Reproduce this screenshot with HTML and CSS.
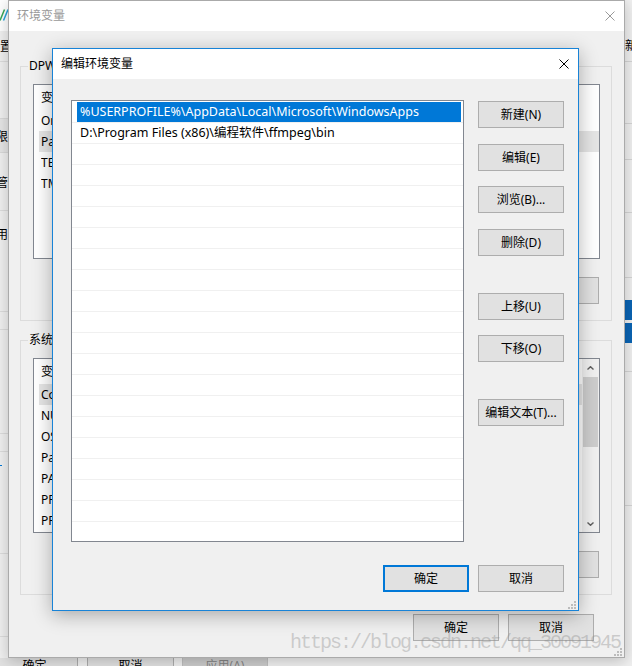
FILE: index.html
```html
<!DOCTYPE html>
<html lang="zh-CN">
<head>
<meta charset="utf-8">
<title>编辑环境变量</title>
<link rel="stylesheet" href="styles.css">
</head>
<body>
<div class="desk">
  <aside class="bg-left">
    <div class="bl-top">
      <svg class="bl-logo" width="8" height="12" viewBox="0 0 8 12"><path d="M0 11.5 L4.5 0.5" stroke="#3aa757" stroke-width="1.5"/><path d="M3.5 11.5 L8 0.5" stroke="#27a4dd" stroke-width="1.5"/></svg>
    </div>
    <div class="bl-cell bl-h31 bl-line"><span class="bl-txt">置</span></div>
    <div class="bl-space bl-h56"></div>
    <div class="bl-cell bl-band"><span class="bl-txt bl-shift">限</span></div>
    <div class="bl-cell bl-h58 bl-line"><span class="bl-txt bl-shift">管</span></div>
    <div class="bl-cell bl-h45"><span class="bl-txt bl-shift">用</span></div>
    <div class="bl-space bl-h56 bl-line"></div>
    <div class="bl-space bl-h18 bl-line"></div>
    <div class="bl-space bl-h104 bl-line"></div>
    <div class="bl-space bl-h18 bl-line"></div>
    <div class="bl-space bl-h30"><span class="bl-tick"></span></div>
    <div class="bl-space bl-h72 bl-line"></div>
    <div class="bl-space bl-h83 bl-line"></div>
  </aside>

  <aside class="bg-right">
    <div class="br-cell br-h62 br-line"><span class="br-txt">新</span></div>
    <div class="br-cell br-h62 br-line"></div>
    <div class="br-cell br-h36 br-line"></div>
    <div class="br-cell br-h53 br-line"></div>
    <div class="br-cell br-h65 br-line"></div>
    <div class="br-cell br-h22"></div>
    <div class="br-blue br-h20"></div>
    <div class="br-cell br-h3"></div>
    <div class="br-blue br-h20"></div>
    <div class="br-cell br-h29 br-line"></div>
    <div class="br-cell br-h134 br-line"></div>
  </aside>

  <div class="bg-bottom">
    <div class="bb-row">
      <span class="bb-btn bb-first">确定</span>
      <span class="bb-btn">取消</span>
      <span class="bb-btn bb-off">应用(A)</span>
    </div>
  </div>

  <section class="win env">
    <header class="titlebar">
      <span class="title env-title">环境变量</span>
      <svg class="close" width="10" height="10" viewBox="0 0 10 10"><path d="M0.5 0.5 L9.5 9.5 M9.5 0.5 L0.5 9.5" stroke="#999" stroke-width="1"/></svg>
    </header>
    <div class="env-body">
      <fieldset class="group">
        <legend>DPW 的用户变量(U)</legend>
        <div class="lv">
          <div class="lv-main">
            <div class="lv-head"><span class="col-name">变量</span><span class="col-val">值</span></div>
            <div class="lv-row"><span class="col-name">OneDrive</span><span class="col-val">C:\Users\DPW\OneDrive</span></div>
            <div class="lv-row lv-sel"><span class="col-name">Path</span><span class="col-val">%USERPROFILE%\AppData\Local\Microsoft\WindowsApps;</span></div>
            <div class="lv-row"><span class="col-name">TEMP</span><span class="col-val">%USERPROFILE%\AppData\Local\Temp</span></div>
            <div class="lv-row"><span class="col-name">TMP</span><span class="col-val">%USERPROFILE%\AppData\Local\Temp</span></div>
          </div>
        </div>
        <div class="btnrow">
          <button class="btn">新建(N)...</button>
          <button class="btn">编辑(E)...</button>
          <button class="btn">删除(D)</button>
        </div>
      </fieldset>
      <fieldset class="group group2">
        <legend>系统变量(S)</legend>
        <div class="lv">
          <div class="lv-main">
            <div class="lv-head"><span class="col-name">变量</span><span class="col-val">值</span></div>
            <div class="lv-row lv-sel"><span class="col-name">ComSpec</span><span class="col-val">C:\Windows\system32\cmd.exe</span></div>
            <div class="lv-row"><span class="col-name">NUMBER_OF_PROCESSORS</span><span class="col-val">4</span></div>
            <div class="lv-row"><span class="col-name">OS</span><span class="col-val">Windows_NT</span></div>
            <div class="lv-row"><span class="col-name">Path</span><span class="col-val">C:\Windows\system32;C:\Windows</span></div>
            <div class="lv-row"><span class="col-name">PATHEXT</span><span class="col-val">.COM;.EXE;.BAT;.CMD</span></div>
            <div class="lv-row"><span class="col-name">PROCESSOR_ARCHITECTURE</span><span class="col-val">AMD64</span></div>
            <div class="lv-row"><span class="col-name">PROCESSOR_IDENTIFIER</span><span class="col-val">Intel64 Family 6</span></div>
          </div>
          <div class="vscroll">
            <span class="sb-arrow"><svg width="7" height="4" viewBox="0 0 7 4"><path d="M0.5 3.5 L3.5 0.7 L6.5 3.5" fill="none" stroke="#606060" stroke-width="1.4"/></svg></span>
            <div class="sb-track"><span class="sb-thumb"></span></div>
            <span class="sb-arrow"><svg width="7" height="4" viewBox="0 0 7 4"><path d="M0.5 0.5 L3.5 3.3 L6.5 0.5" fill="none" stroke="#606060" stroke-width="1.4"/></svg></span>
          </div>
        </div>
        <div class="btnrow">
          <button class="btn">新建(W)...</button>
          <button class="btn">编辑(I)...</button>
          <button class="btn">删除(L)</button>
        </div>
      </fieldset>
      <div class="okrow">
        <button class="btn">确定</button>
        <button class="btn">取消</button>
      </div>
    </div>
    <svg class="grip" width="8" height="8" viewBox="0 0 8 8"><g fill="#bcbcbc"><rect x="6" y="0" width="2" height="2"/><rect x="3" y="3" width="2" height="2"/><rect x="6" y="3" width="2" height="2"/><rect x="0" y="6" width="2" height="2"/><rect x="3" y="6" width="2" height="2"/><rect x="6" y="6" width="2" height="2"/></g></svg>
  </section>

  <section class="win dlg">
    <header class="titlebar">
      <span class="title">编辑环境变量</span>
      <svg class="close" width="10" height="10" viewBox="0 0 10 10"><path d="M0.5 0.5 L9.5 9.5 M9.5 0.5 L0.5 9.5" stroke="#000" stroke-width="1"/></svg>
    </header>
    <div class="dlg-body">
      <div class="dlg-main">
        <div class="pathlist">
          <div class="item item-sel"><span class="cell">%USERPROFILE%\AppData\Local\Microsoft\WindowsApps</span></div>
          <div class="item"><span class="cell">D:\Program Files (x86)\编程软件\ffmpeg\bin</span></div>
        </div>
        <div class="btncol">
          <button class="btn">新建(N)</button>
          <button class="btn mt16">编辑(E)</button>
          <button class="btn mt15">浏览(B)...</button>
          <button class="btn mt16">删除(D)</button>
          <button class="btn mt37">上移(U)</button>
          <button class="btn mt15">下移(O)</button>
          <button class="btn mt37">编辑文本(T)...</button>
        </div>
      </div>
      <div class="dlg-foot">
        <button class="btn btn-default">确定</button>
        <button class="btn">取消</button>
      </div>
    </div>
    <svg class="grip dlg-grip" width="8" height="8" viewBox="0 0 8 8"><g fill="#bcbcbc"><rect x="6" y="0" width="2" height="2"/><rect x="3" y="3" width="2" height="2"/><rect x="6" y="3" width="2" height="2"/><rect x="0" y="6" width="2" height="2"/><rect x="3" y="6" width="2" height="2"/><rect x="6" y="6" width="2" height="2"/></g></svg>
  </section>

  <div class="watermark">https://blog.csdn.net/qq_30091945</div>
</div>
</body>
</html>
```

FILE: styles.css
```css
* { box-sizing: border-box; }
html, body { margin: 0; padding: 0; }
body {
  width: 632px;
  height: 666px;
  overflow: hidden;
  background: #f0f0f0;
  font-family: "Noto Sans", "Noto Sans CJK SC", sans-serif;
  font-size: 12px;
  line-height: 16px;
  color: #000;
}
.desk { position: relative; width: 632px; height: 666px; overflow: hidden; }

/* ---------- third window fragments (behind) ---------- */
.bg-left {
  position: absolute; left: 0; top: 0; width: 8px; height: 666px;
  display: flex; flex-direction: column; overflow: hidden;
}
.bl-top { height: 31px; flex: none; background: #fff; display: flex; align-items: center; }
.bl-logo { display: block; margin-top: -2px; }
.bl-cell { flex: none; display: flex; align-items: center; overflow: hidden; white-space: nowrap; }
.bl-space { flex: none; }
.bl-line { border-bottom: 1px solid #dcdcdc; }
.bl-txt { display: block; font-family: "Noto Sans CJK SC", sans-serif; }
.bl-shift { margin-left: -4px; }
.bl-h31 { height: 31px; }
.bl-h56 { height: 56px; }
.bl-h58 { height: 58px; }
.bl-h45 { height: 45px; }
.bl-h18 { height: 18px; }
.bl-h104 { height: 104px; }
.bl-h30 { height: 30px; position: relative; }
.bl-h72 { height: 72px; }
.bl-h83 { height: 83px; }
.bl-band { height: 35px; background: #e5e5e5; border-top: 1px solid #d9d9d9; border-bottom: 1px solid #d9d9d9; }
.bl-tick { position: absolute; left: 0; top: 13px; width: 2px; height: 1px; background: #0078d7; }

.bg-right {
  position: absolute; left: 624px; top: 0; width: 8px; height: 666px;
  display: flex; flex-direction: column; overflow: hidden;
}
.br-cell { flex: none; overflow: hidden; white-space: nowrap; }
.br-line { border-bottom: 1px solid #d5d5d5; }
.br-txt { display: block; margin-top: 37px; margin-left: 1px; font-family: "Noto Sans CJK SC", sans-serif; }
.br-blue { flex: none; background: #0a64b4; }
.br-h62 { height: 62px; }
.br-h36 { height: 36px; }
.br-h53 { height: 53px; }
.br-h65 { height: 65px; }
.br-h22 { height: 22px; }
.br-h20 { height: 20px; }
.br-h3 { height: 3px; }
.br-h29 { height: 29px; }
.br-h134 { height: 134px; }

.bg-bottom { position: absolute; left: 0; top: 658px; width: 632px; height: 8px; overflow: hidden; }
.bb-row { display: flex; gap: 9px; margin-top: -6px; margin-left: -9px; }
.bb-btn {
  flex: none; width: 87px; height: 27px;
  border: 1px solid #adadad; background: #e1e1e1;
  display: flex; align-items: center; justify-content: center;
}
.bb-off { width: 86px; margin-left: -1px; background: #cccccc; border-color: #bfbfbf; color: #838383; }

/* ---------- windows ---------- */
.win { position: absolute; display: flex; flex-direction: column; background: #f0f0f0; }
.titlebar {
  flex: none; height: 30px; background: #fff;
  display: flex; align-items: center; justify-content: space-between;
  padding: 0 9px 0 8px;
}
.title { white-space: nowrap; }
.close { display: block; }
.grip { position: absolute; right: 2px; bottom: 1px; display: block; }

.btn {
  flex: none; width: 86px; height: 27px; margin: 0; padding: 0;
  border: 1px solid #adadad; background: #e1e1e1;
  font: inherit; color: #000;
  display: flex; align-items: center; justify-content: center;
  white-space: nowrap;
}

/* env window */
.env {
  left: 8px; top: 0; width: 617px; height: 658px;
  border: 1px solid #aaaaaa;
  box-shadow: 0 3px 14px rgba(0, 0, 0, 0.22);
}
.env-title { color: #999; }
.env-body { flex: 1; padding: 27px 12px 0 11px; display: flex; flex-direction: column; min-height: 0; }
.group { margin: 0; border: 1px solid #dcdcdc; padding: 10px 11px 16px 12px; min-width: 0; }
.group2 { margin-top: 11px; }
.group legend { padding: 0 1px; margin-left: -5px; height: 16px; line-height: 16px; }
.lv { height: 175px; border: 1px solid #828790; background: #fff; overflow: hidden; display: flex; }
.lv-main { flex: 1; min-width: 0; }
.lv-head { height: 25px; display: flex; align-items: center; padding-left: 7px; }
.lv-row { height: 21px; margin-left: 5px; padding-left: 2px; display: flex; align-items: center; white-space: nowrap; }
.lv-sel { background: #e5e5e5; }
.col-name { width: 170px; flex: none; overflow: hidden; }
.col-val { width: 300px; flex: none; overflow: hidden; text-overflow: ellipsis; white-space: nowrap; }
.vscroll { width: 17px; flex: none; background: #f0f0f0; display: flex; flex-direction: column; }
.sb-arrow { height: 17px; flex: none; display: flex; align-items: center; justify-content: center; }
.sb-arrow svg { display: block; }
.sb-track { flex: 1; padding: 1px 1px 0 1px; }
.sb-thumb { display: block; height: 70px; background: #cdcdcd; }
.btnrow { display: flex; justify-content: flex-end; gap: 9px; margin-top: 18px; padding-right: 1px; }
.okrow { display: flex; justify-content: flex-end; gap: 9px; margin-top: 19px; padding-right: 18px; }

/* edit dialog */
.dlg {
  left: 52px; top: 48px; width: 527px; height: 563px;
  border: 1px solid #1883d7;
  box-shadow: 0 4px 18px rgba(0, 0, 0, 0.3);
}
.dlg-body { flex: 1; padding: 21px 14px 18px 18px; display: flex; flex-direction: column; }
.dlg-main { display: flex; gap: 14px; }
.pathlist {
  flex: none; width: 393px; height: 442px;
  border: 1px solid #828790;
  padding-top: 1px;
  font-size: 12.5px;
  background:
    linear-gradient(#fff, #fff) 0 0 / 100% 1px no-repeat,
    repeating-linear-gradient(to bottom, transparent 0, transparent 20px, #f0f0f0 20px, #f0f0f0 21px) 0 1px,
    #fff;
  overflow: hidden;
}
.item { height: 21px; padding: 0 2px 1px 5px; }
.cell { display: block; height: 20px; line-height: 20px; padding-left: 3px; white-space: nowrap; }
.item-sel .cell { background: #0078d7; color: #fff; }
.btncol { display: flex; flex-direction: column; width: 86px; padding-top: 1px; }
.mt15 { margin-top: 15px; }
.mt16 { margin-top: 16px; }
.mt37 { margin-top: 37px; }
.dlg-foot { display: flex; justify-content: flex-end; gap: 9px; margin-top: 23px; }
.btn-default { border: 2px solid #0078d7; }

.watermark {
  position: absolute; left: 290px; top: 632px;
  font-family: "Liberation Mono", monospace;
  font-size: 20px; line-height: 22px; letter-spacing: -2px;
  color: rgba(140, 140, 140, 0.38);
  white-space: nowrap;
}
```
